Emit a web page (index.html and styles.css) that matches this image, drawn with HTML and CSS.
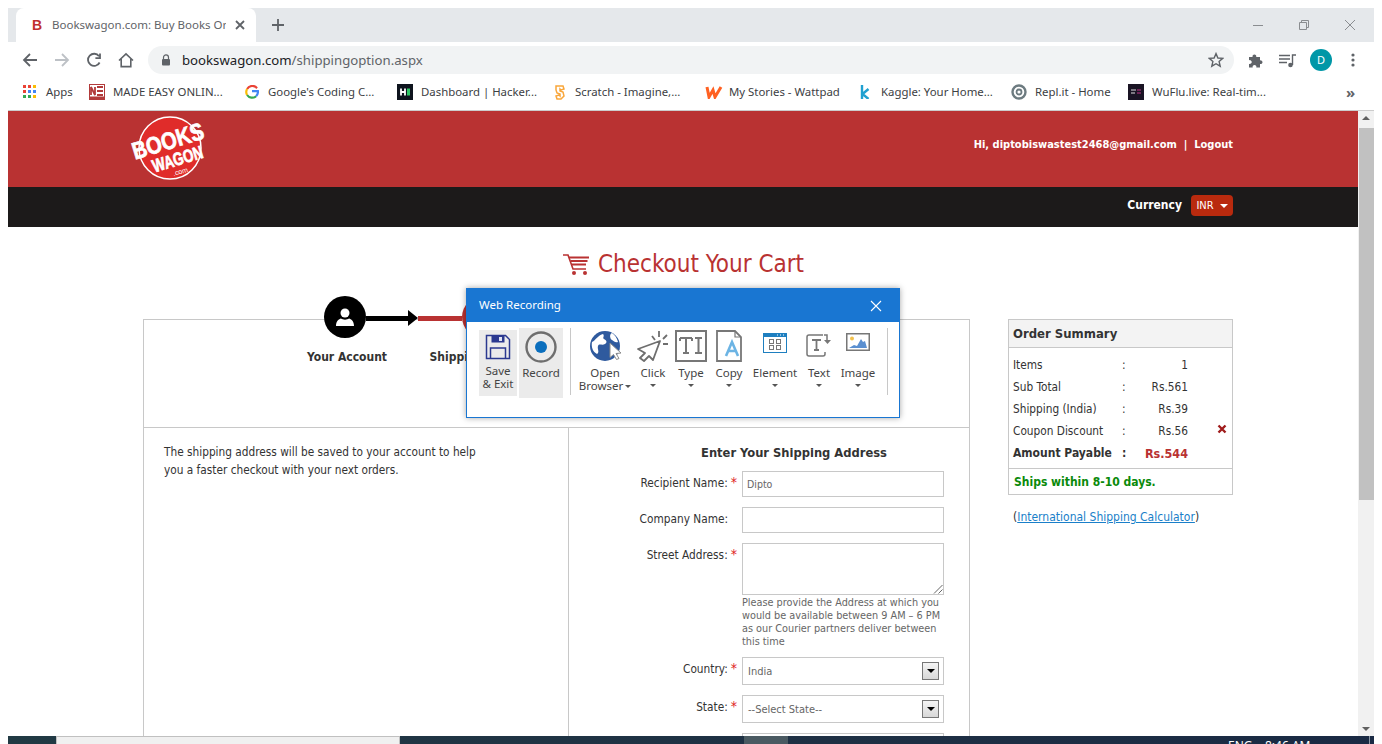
FILE: index.html
```html
<!doctype html>
<html>

<head>
    <meta charset="utf-8">
    <meta name="viewport" content="width=device-width, initial-scale=1">
    <title>Bookswagon.com: Buy Books Online</title>
    <link rel="stylesheet" href="styles.css">
</head>

<body>
    <div class="browser">
        <!-- tab strip -->
        <div class="tabstrip">
            <div class="tab">
                <span class="tab-fav">B</span>
                <span class="tab-title">Bookswagon.com: Buy Books Online</span>
                <svg class="tab-x" width="12" height="12" viewBox="0 0 12 12"><path d="M2 2l8 8M10 2l-8 8" stroke="#5f6368" stroke-width="1.8"/></svg>
            </div>
            <svg class="tab-new" width="14" height="14" viewBox="0 0 14 14"><path d="M7 1v12M1 7h12" stroke="#5f6368" stroke-width="1.8"/></svg>
            <div class="win-btns">
                <svg width="12" height="12" viewBox="0 0 12 12"><path d="M1 6.5h10" stroke="#8a8d90"/></svg>
                <svg width="12" height="12" viewBox="0 0 12 12" fill="none"><path d="M1.5 3.5h7v7h-7zM3.5 3.5v-2h7v7h-2" stroke="#8a8d90"/></svg>
                <svg width="12" height="12" viewBox="0 0 12 12"><path d="M1 1l10 10M11 1L1 11" stroke="#8a8d90"/></svg>
            </div>
        </div>

        <!-- toolbar -->
        <div class="toolbar">
            <svg class="nav" width="16" height="16" viewBox="0 0 16 16" fill="none"><path d="M15 8H2M8 2L2 8l6 6" stroke="#5f6368" stroke-width="1.8"/></svg>
            <svg class="nav" width="16" height="16" viewBox="0 0 16 16" fill="none"><path d="M1 8h13M8 2l6 6-6 6" stroke="#bdc1c6" stroke-width="1.8"/></svg>
            <svg class="nav" width="16" height="16" viewBox="0 0 16 16" fill="none"><path d="M13.6 10.5A6.1 6.1 0 1 1 13 4.2M14 1.5v4.6H9.4" stroke="#5f6368" stroke-width="1.8"/></svg>
            <svg class="nav" width="16" height="16" viewBox="0 0 16 16" fill="none"><path d="M1 8.5L8 1.8l7 6.7M3.2 7v7.6h9.6V7" stroke="#5f6368" stroke-width="1.6"/></svg>
            <div class="omnibox">
                <svg width="10" height="12" viewBox="0 0 10 12"><path d="M2.5 5V3.4a2.5 2.5 0 0 1 5 0V5" fill="none" stroke="#5f6368" stroke-width="1.2"/><rect x="1" y="5" width="8" height="6.5" rx="1" fill="#5f6368"/></svg>
                <span class="url"><b>bookswagon.com</b>/shippingoption.aspx</span>
                <svg class="star" width="16" height="16" viewBox="0 0 16 16"><path d="M8 1.6l1.9 4.4 4.8.4-3.6 3.1 1.1 4.7L8 11.7l-4.2 2.5 1.1-4.7-3.6-3.1 4.8-.4z" fill="none" stroke="#5f6368" stroke-width="1.4"/></svg>
            </div>
            <svg class="puzzle" width="16" height="16" viewBox="0 0 16 16"><path d="M1 5h3.6a1.9 1.9 0 1 1 3.6 0H12v3.4a1.9 1.9 0 1 1 0 3.6V15.500H8.300a1.900 1.900 0 1 0-3.600 0H1v-3.800a1.900 1.900 0 1 0 0-3.400z" fill="#5f6368"/></svg>
            <svg class="media" width="18" height="14" viewBox="0 0 18 14" fill="none"><path d="M0 1.500h11M0 5h11M0 8.500h8" stroke="#5f6368" stroke-width="1.300"/><path d="M13.500 11V1h3.500" stroke="#5f6368" stroke-width="1.400"/><circle cx="11.500" cy="11" r="2.300" fill="#5f6368"/></svg>
            <span class="avatar">D</span>
            <svg class="dots" width="4" height="14" viewBox="0 0 4 14"><circle cx="2" cy="2" r="1.600" fill="#5f6368"/><circle cx="2" cy="7" r="1.600" fill="#5f6368"/><circle cx="2" cy="12" r="1.600" fill="#5f6368"/></svg>
        </div>

        <!-- bookmarks -->
        <div class="bookmarks">
            <a class="bm bm-apps">
                <svg width="14" height="14" viewBox="0 0 14 14">
                    <rect width="3" height="3" fill="#ea4335"/><rect x="5" width="3" height="3" fill="#ea4335"/><rect x="10" width="3" height="3" fill="#fbbc04"/>
                    <rect y="5" width="3" height="3" fill="#ea4335"/><rect x="5" y="5" width="3" height="3" fill="#4285f4"/><rect x="10" y="5" width="3" height="3" fill="#4285f4"/>
                    <rect y="10" width="3" height="3" fill="#34a853"/><rect x="5" y="10" width="3" height="3" fill="#34a853"/><rect x="10" y="10" width="3" height="3" fill="#fbbc04"/>
                </svg>
                Apps
            </a>
            <a class="bm bm-made">
                <svg width="16" height="16" viewBox="0 0 16 16"><rect x=".5" y=".5" width="15" height="15" fill="#fff" stroke="#b23a3a"/><path d="M2 11V3l4 8V3M8 3h6M8 7h6M8 11h6" fill="none" stroke="#b23a3a" stroke-width="1.800"/><rect x="1" y="12.500" width="14" height="2.500" fill="#b23a3a"/></svg>
                MADE EASY ONLIN...
            </a>
            <a class="bm bm-google">
                <svg width="14" height="14" viewBox="0 0 14 14" fill="none" stroke-width="2.200"><path d="M12 3.200A6 6 0 0 0 2.100 4" stroke="#ea4335"/><path d="M2.100 4a6 6 0 0 0 0 6" stroke="#fbbc04"/><path d="M2.100 10a6 6 0 0 0 9 1.200" stroke="#34a853"/><path d="M11.100 11.200A6 6 0 0 0 12.900 6.200H7" stroke="#4285f4"/></svg>
                Google's Coding C...
            </a>
            <a class="bm bm-hacker">
                <svg width="16" height="16" viewBox="0 0 16 16"><rect width="16" height="16" fill="#0e141e"/><path d="M4 4.500v7M8 4.500v7M4 8h4" stroke="#fff" stroke-width="1.800"/><rect x="10" y="4.500" width="3" height="7" fill="#2ec866"/></svg>
                Dashboard | Hacker...
            </a>
            <a class="bm bm-scratch">
                <svg width="14" height="16" viewBox="0 0 14 16"><path d="M3 2h7l1 3-3 1-1-1 0 2 3 1 1 4-3 3H4l-1-3 3-1 1 1v-2L4 9 3 6z" fill="#fff" stroke="#f9a63a" stroke-width="1.500"/></svg>
                Scratch - Imagine,...
            </a>
            <a class="bm bm-wattpad">
                <svg width="18" height="14" viewBox="0 0 18 14"><path d="M2 2l2 10 4-7 2 7 6-10" fill="none" stroke="#ff6122" stroke-width="3"/></svg>
                My Stories - Wattpad
            </a>
            <a class="bm bm-kaggle">
                <svg width="10" height="14" viewBox="0 0 10 14"><path d="M2 0v14M8.500 4L2.500 9l6 5" fill="none" stroke="#20a0d0" stroke-width="2.400"/></svg>
                Kaggle: Your Home...
            </a>
            <a class="bm bm-repl">
                <svg width="16" height="16" viewBox="0 0 16 16" fill="none"><circle cx="8" cy="8" r="6.500" stroke="#6d7b80" stroke-width="2.400"/><circle cx="8" cy="8" r="2.500" stroke="#6d7b80" stroke-width="1.800"/></svg>
                Repl.it - Home
            </a>
            <a class="bm bm-wuflu">
                <svg width="16" height="16" viewBox="0 0 16 16"><rect width="16" height="16" fill="#1a1424"/><path d="M3 6h5M3 9h4" stroke="#ddd" stroke-width="1.200"/><path d="M9 6h4M9 9h4" stroke="#c2338a" stroke-width="1.200"/></svg>
                WuFlu.live: Real-tim...
            </a>
            <span class="bm-more">»</span>
        </div>

        <!-- page -->
        <div class="viewport">
            <div class="page">
                <div class="site-head">
                    <svg class="logo" width="80" height="70" viewBox="0 0 80 70">
                        <circle cx="44" cy="32" r="31" fill="#e02c2a" stroke="#fff" stroke-width="1.500"/>
                        <g transform="rotate(-17 44 32)" text-anchor="middle" font-family="'Liberation Sans', sans-serif" font-weight="700" fill="#fff">
                            <text class="logo-big" x="44" y="33" font-size="24" textLength="74" lengthAdjust="spacingAndGlyphs">BOOKS</text>
                            <text class="logo-big" x="48" y="51" font-size="18" textLength="52" lengthAdjust="spacingAndGlyphs">WAGON</text>
                            <text x="47" y="60" font-size="7" font-weight="400">.com</text>
                        </g>
                    </svg>
                    <div class="hi">Hi, diptobiswastest2468@gmail.com &nbsp;|&nbsp; Logout</div>
                </div>
                <div class="currency-bar">
                    <span class="cur-label">Currency</span>
                    <span class="cur-btn">INR <i class="caret-w"></i></span>
                </div>

                <h1 class="checkout">
                    <svg width="28" height="22" viewBox="0 0 28 22" fill="none"><path d="M0 1h5l5 14h13" stroke="#b93232" stroke-width="1.600"/><path d="M6 3.500h20M7.500 7h17M8.500 10.500h14.500" stroke="#b93232" stroke-width="2"/><circle cx="11" cy="19" r="2" fill="#b93232"/><circle cx="22" cy="19" r="2" fill="#b93232"/></svg>
                    Checkout Your Cart
                </h1>

                <div class="columns">
                    <div class="panel">
                        <div class="steps">
                            <div class="step step-one">
                                <span class="dot dot-black">
                                    <svg width="20" height="20" viewBox="0 0 20 20"><circle cx="10" cy="6" r="4.500" fill="#fff"/><path d="M1 19c0-5 3-7 5-7.500 2 1.500 6 1.500 8 0 2 .5 5 2.500 5 7.500z" fill="#fff"/></svg>
                                </span>
                                <span class="step-name">Your Account</span>
                            </div>
                            <div class="arrow"></div>
                            <div class="redline"></div>
                            <div class="step step-two">
                                <span class="dot dot-red"></span>
                                <span class="step-name">Shipping Address</span>
                            </div>
                        </div>
                        <div class="panel-body">
                            <div class="note">The shipping address will be saved to your account to help you a faster checkout with your next orders.</div>
                            <div class="form">
                                <h3 class="form-title">Enter Your Shipping Address</h3>
                                <div class="row"><label>Recipient Name:<em>*</em></label><div class="field">Dipto</div></div>
                                <div class="row"><label class="plain">Company Name:</label><div class="field"></div></div>
                                <div class="row row-tight">
                                    <label>Street Address:<em>*</em></label>
                                    <div class="field-wrap">
                                        <div class="field field-area">
                                            <svg width="10" height="10" viewBox="0 0 10 10"><path d="M9.500 1L1 9.500M9.500 5.500l-4 4" stroke="#666"/></svg>
                                        </div>
                                        <p class="help">Please provide the Address at which you would be available between 9 AM – 6 PM as our Courier partners deliver between this time</p>
                                    </div>
                                </div>
                                <div class="row row-sel"><label>Country:<em>*</em></label><div class="field field-sel">India<span class="sel-btn"><i class="caret-k"></i></span></div></div>
                                <div class="row row-sel"><label>State:<em>*</em></label><div class="field field-sel">--Select State--<span class="sel-btn"><i class="caret-k"></i></span></div></div>
                                <div class="row"><label></label><div class="field"></div></div>
                            </div>
                        </div>
                    </div>

                    <div class="side">
                        <div class="summary">
                            <div class="sum-title">Order Summary</div>
                            <div class="sum-rows">
                                <div class="sum-row"><span>Items</span><span>:</span><span class="amt">1</span></div>
                                <div class="sum-row"><span>Sub Total</span><span>:</span><span class="amt">Rs.561</span></div>
                                <div class="sum-row"><span>Shipping (India)</span><span>:</span><span class="amt">Rs.39</span></div>
                                <div class="sum-row"><span>Coupon Discount</span><span>:</span><span class="amt">Rs.56</span>
                                    <svg width="10" height="10" viewBox="0 0 10 10"><path d="M1.500 1.500l7 7M8.500 1.500l-7 7" stroke="#a01c1c" stroke-width="2.400"/></svg>
                                </div>
                                <div class="sum-row sum-total"><span>Amount Payable</span><span>:</span><span class="amt">Rs.544</span></div>
                            </div>
                            <div class="ships">Ships within 8-10 days.</div>
                        </div>
                        <div class="calc">(<a>International Shipping Calculator</a>)</div>
                    </div>
                </div>
            </div>
            <div class="scrollbar">
                <i class="sb-up"></i>
                <div class="sb-thumb"></div>
                <i class="sb-down"></i>
            </div>
        </div>

        <!-- taskbar peeking in at the bottom -->
        <div class="taskbar">
            <div class="tb-window"></div>
            <div class="tb-active"></div>
            <div class="tb-clock">ENG &nbsp;&nbsp; 8:46 AM</div>
            <div class="tb-edge"></div>
        </div>

        <!-- recorder dialog -->
        <div class="recorder">
            <div class="rec-head">
                <span>Web Recording</span>
                <svg width="12" height="12" viewBox="0 0 12 12"><path d="M1 1l10 10M11 1L1 11" stroke="#fff" stroke-width="1.100"/></svg>
            </div>
            <div class="rec-body">
                <div class="rec-btn rec-save">
                    <svg width="26" height="26" viewBox="0 0 26 26" fill="none"><path d="M1.500 1.500h19l4 4v19h-23z" stroke="#2b3990" stroke-width="1.500"/><rect x="6.500" y="1.500" width="13" height="7" fill="#2b3990"/><rect x="14" y="3" width="3" height="4" fill="#dfe3f3"/><path d="M5.500 24v-10h15v10" stroke="#2b3990" stroke-width="1.500"/></svg>
                    <span>Save<br>&amp; Exit</span>
                </div>
                <div class="rec-btn rec-record">
                    <svg width="32" height="32" viewBox="0 0 32 32"><circle cx="16" cy="16" r="14.500" fill="none" stroke="#6e6e6e" stroke-width="2.400"/><circle cx="16" cy="16" r="6" fill="#0a6ebd"/></svg>
                    <span>Record</span>
                </div>
                <div class="rec-sep"></div>
                <div class="rec-tools">
                    <div class="tool">
                        <div class="tool-ico">
                            <svg width="36" height="32" viewBox="0 0 36 32">
                                <circle cx="18" cy="16" r="15" fill="#2f5a9e"/>
                                <path d="M5 12c4-2 5-6 11-8 2 2-1 4 1 5s4 3 1 5-6-1-7 2 2 6-1 8c-4-2-6-7-5-12zM25 3c3 2 5 5 6 9-3 1-4-1-6-2s-3-6 0-7z" fill="#fff"/>
                                <path d="M23 13l11 10-5 .5 3 5-2.500 1-3-5-3.500 3z" fill="#fff" stroke="#8a8a8a"/>
                            </svg>
                        </div>
                        <span>Open<br>Browser<i class="caret-g caret-inline"></i></span>
                    </div>
                    <div class="tool">
                        <div class="tool-ico">
                            <svg width="32" height="32" viewBox="0 0 32 32" fill="none">
                                <path d="M23 11L1 19l7 4-5 5 4 3 5-5 4 4z" stroke="#6e6e6e" stroke-width="1.800" stroke-linejoin="round"/>
                                <path d="M15 6l3 4M22 1v6M30 5l-4 4M31 14h-5" stroke="#6e6e6e" stroke-width="1.800"/>
                            </svg>
                        </div>
                        <span>Click</span>
                        <i class="caret-g"></i>
                    </div>
                    <div class="tool">
                        <div class="tool-ico">
                            <svg width="32" height="32" viewBox="0 0 32 32" fill="none">
                                <rect x="1" y="1" width="30" height="30" stroke="#777" stroke-width="2"/>
                                <path d="M5 8h12M11 8v15M8 23h6M20 8h7M23.500 8v15M20 23h7M5 8v3M17 8v3" stroke="#777" stroke-width="2"/>
                            </svg>
                        </div>
                        <span>Type</span>
                        <i class="caret-g"></i>
                    </div>
                    <div class="tool">
                        <div class="tool-ico">
                            <svg width="26" height="32" viewBox="0 0 26 32" fill="none">
                                <path d="M1 1h18l6 6v24H1z" stroke="#777" stroke-width="1.800"/>
                                <path d="M19 1v6h6" stroke="#777" stroke-width="1.200"/>
                                <path d="M10 26l6-14 6 14M12 21h8" stroke="#6cb4e4" stroke-width="2.600"/>
                            </svg>
                        </div>
                        <span>Copy</span>
                        <i class="caret-g"></i>
                    </div>
                    <div class="tool">
                        <div class="tool-ico tool-mid">
                            <svg width="24" height="20" viewBox="0 0 24 20">
                                <rect width="24" height="20" fill="#1e7fc0"/>
                                <rect x="1" y="4" width="22" height="15" fill="#fff"/>
                                <path d="M14 2h1M17 2h1M20 2h1" stroke="#fff"/>
                                <g fill="none" stroke="#777"><rect x="6.500" y="6.500" width="4" height="4"/><rect x="13.500" y="6.500" width="4" height="4"/><rect x="6.500" y="12.500" width="4" height="4"/><rect x="13.500" y="12.500" width="4" height="4"/></g>
                            </svg>
                        </div>
                        <span>Element</span>
                        <i class="caret-g"></i>
                    </div>
                    <div class="tool">
                        <div class="tool-ico tool-mid">
                            <svg width="26" height="24" viewBox="0 0 26 24" fill="none">
                                <path d="M17 2H3a2 2 0 0 0-2 2v17a2 2 0 0 0 2 2h14a2 2 0 0 0 2-2v-2" stroke="#777" stroke-width="1.500"/>
                                <path d="M6 7h9M10.500 7v10M8 17h5" stroke="#777" stroke-width="1.800"/>
                                <path d="M18 2h3v6" stroke="#777" stroke-width="1.500"/><path d="M18 7h7l-3.500 4z" fill="#777"/>
                            </svg>
                        </div>
                        <span>Text</span>
                        <i class="caret-g"></i>
                    </div>
                    <div class="tool">
                        <div class="tool-ico tool-mid">
                            <svg width="24" height="18" viewBox="0 0 24 18">
                                <rect x=".750" y=".750" width="22.500" height="16.500" fill="#fff" stroke="#777" stroke-width="1.500"/>
                                <circle cx="6" cy="5.500" r="2" fill="#f2c14e"/>
                                <path d="M3 15l5-3 3 1 4-7 2 3 2-1 2 7z" fill="#5a8fd0"/>
                            </svg>
                        </div>
                        <span>Image</span>
                        <i class="caret-g"></i>
                    </div>
                </div>
                <div class="rec-sep rec-sep-end"></div>
            </div>
        </div>
    </div>
</body>

</html>
```

FILE: styles.css
```css
html, body {
    margin: 0;
    height: 744px;
    overflow: hidden;
    background: #fff;
}
body {
    font-family: 'DejaVu Sans Condensed', 'DejaVu Sans', sans-serif;
    font-size: 12px;
    color: #333;
}
.browser {
    position: relative;
    margin: 0 8px;
    padding-top: 8px;
    height: 736px;
    display: flex;
    flex-direction: column;
    font-family: 'Noto Sans', sans-serif;
}

/* tab strip */
.tabstrip {
    height: 34px;
    background: #e5e8eb;
    display: flex;
    align-items: flex-end;
    padding-left: 8px;
    flex: none;
}
.tab {
    width: 240px;
    height: 34px;
    background: #fff;
    border-radius: 8px 8px 0 0;
    display: flex;
    align-items: center;
    box-sizing: border-box;
    padding: 0 10px 0 16px;
    color: #5f6368;
    font-size: 11.500px;
}
.tab-fav {
    font: 700 14px 'Liberation Sans', sans-serif;
    color: #c0302f;
    width: 12px;
    margin-right: 8px;
}
.tab-title {
    flex: 1;
    overflow: hidden;
    white-space: nowrap;
    margin: 0 8px 2px 0;
}
.tab-new {
    margin: 0 0 10px 15px;
}
.win-btns {
    margin-left: auto;
    margin-bottom: 11px;
    display: flex;
    gap: 34px;
    padding-right: 18px;
}

/* toolbar */
.toolbar {
    height: 32px;
    display: flex;
    align-items: flex-end;
    flex: none;
}
.toolbar svg {
    margin-bottom: 6px;
}
.nav {
    margin-left: 16px;
    width: 16px;
}
.toolbar .nav:first-child {
    margin-left: 14px;
}
.omnibox {
    width: 1086px;
    height: 28px;
    margin-left: 14px;
    background: #f1f3f4;
    border-radius: 14px;
    display: flex;
    align-items: center;
    padding-left: 13px;
    box-sizing: border-box;
}
.toolbar .omnibox svg {
    margin-bottom: 0;
}
.url {
    margin-left: 11px;
    font-size: 13.200px;
    color: #5f6368;
}
.url b {
    font-weight: 400;
    color: #202124;
}
.star {
    margin-left: auto;
    margin-right: 10px;
}
.puzzle {
    margin-left: 14px;
}
.media {
    margin-left: 15px;
}
.avatar {
    width: 22px;
    height: 22px;
    border-radius: 50%;
    background: #0097a7;
    color: #fff;
    font-size: 11px;
    line-height: 22px;
    text-align: center;
    margin-left: 13px;
    margin-bottom: 3px;
}
.toolbar .dots {
    margin-left: 19px;
    margin-bottom: 7px;
}

/* bookmarks */
.bookmarks {
    height: 35px;
    padding-bottom: 1px;
    border-bottom: 1px solid #ccc;
    display: flex;
    align-items: center;
    padding-left: 15px;
    flex: none;
    color: #3c4043;
    font-size: 11.400px;
}
.bm {
    display: flex;
    align-items: center;
    gap: 8px;
    white-space: nowrap;
    flex: none;
}
.bm-apps { width: 66px; gap: 9px; }
.bm-made { width: 156px; }
.bm-google { width: 152px; gap: 9px; }
.bm-hacker { width: 156px; }
.bm-scratch { width: 152px; gap: 8px; }
.bm-wattpad { width: 155px; gap: 6px; }
.bm-kaggle { width: 151px; gap: 11px; }
.bm-repl { width: 117px; }
.bm-wuflu { width: 218px; }
.bm-more {
    font-size: 15px;
    font-weight: 700;
    color: #5f6368;
}

/* page area */
.viewport {
    display: flex;
    height: 625px;
    flex: none;
}
.page {
    flex: 1;
    min-width: 0;
    overflow: hidden;
    font-family: 'DejaVu Sans Condensed', 'DejaVu Sans', sans-serif;
    font-size: 11.750px;
}
.site-head {
    height: 76px;
    background: #b93232;
    display: flex;
    align-items: flex-start;
    color: #fff;
    box-sizing: border-box;
    padding: 5px 125px 0 118px;
}
.logo {
    flex: none;
    overflow: visible;
}
.logo-big {
    stroke: #fff;
    stroke-width: .7px;
}
.hi {
    margin-left: auto;
    margin-top: 22px;
    font-weight: 700;
    font-size: 11px;
}
.currency-bar {
    height: 40px;
    background: #1c1a1a;
    color: #fff;
    display: flex;
    align-items: center;
    justify-content: flex-end;
    padding-right: 125px;
    font-weight: 700;
    font-size: 12px;
}
.cur-label {
    margin-bottom: 4px;
}
.cur-btn {
    margin-left: 9px;
    width: 42px;
    height: 21px;
    margin-bottom: 3px;
    background: #b92a0e;
    border-radius: 4px;
    font-weight: 400;
    font-size: 11px;
    display: flex;
    align-items: center;
    justify-content: center;
    gap: 6px;
}
.caret-w {
    border: 4px solid transparent;
    border-top-color: #fff;
    border-bottom: 0;
}
.checkout {
    margin: 23px 0 0;
    height: 69px;
    font-size: 24px;
    font-weight: 400;
    color: #b93232;
    display: flex;
    align-items: flex-start;
    justify-content: center;
    gap: 7px;
    line-height: 28px;
    padding-left: 1px;
}
.checkout svg {
    margin-top: 4px;
}
.columns {
    display: flex;
    padding-left: 135px;
    align-items: flex-start;
}

/* left panel */
.panel {
    width: 827px;
    box-sizing: border-box;
    border: 1px solid #c8c8c8;
    flex: none;
}
.steps {
    height: 108px;
    border-bottom: 1px solid #c8c8c8;
    display: flex;
    align-items: flex-start;
    margin-top: -1px;
    padding-left: 180px;
}
.step {
    display: flex;
    flex-direction: column;
    align-items: center;
    margin-top: -23px;
    flex: none;
}
.step-one,
.step-two {
    width: 42px;
}
.step-name {
    margin-top: 12px;
    font-weight: 700;
    white-space: nowrap;
    font-size: 12px;
}
.step-one .step-name {
    margin-left: 4px;
}
.dot {
    width: 42px;
    height: 42px;
    border-radius: 50%;
    display: flex;
    align-items: center;
    justify-content: center;
    background: #000;
}
.dot-red {
    background: #b93232;
}
.arrow {
    width: 44px;
    height: 5px;
    background: #000;
    margin-top: -3px;
    position: relative;
    flex: none;
}
.arrow::after {
    content: "";
    position: absolute;
    left: 42px;
    top: -6px;
    border-left: 10px solid #000;
    border-top: 8.500px solid transparent;
    border-bottom: 8.500px solid transparent;
}
.redline {
    width: 44px;
    height: 5px;
    background: #b93232;
    margin: -3px 0 0 8px;
    flex: none;
}
.panel-body {
    display: flex;
    height: 400px;
}
.note {
    width: 425px;
    box-sizing: border-box;
    border-right: 1px solid #c8c8c8;
    padding: 15px 70px 0 20px;
    line-height: 18px;
}
.form {
    flex: 1;
    padding-top: 16px;
}
.form-title {
    margin: 0 0 10px;
    font-size: 12.800px;
    text-align: center;
    line-height: 17px;
    padding-left: 50px;
}
.row {
    display: flex;
    margin-bottom: 10px;
}
.row label {
    width: 173px;
    flex: none;
    text-align: right;
    padding: 5px 5px 0 0;
    box-sizing: border-box;
}
.row label.plain {
    padding-right: 14px;
}
.row label em {
    color: #e02020;
    font-style: normal;
    font-size: 14px;
    line-height: 10px;
    margin-left: 3px;
}
.field {
    width: 202px;
    height: 26px;
    border: 1px solid #c8c8c8;
    box-sizing: border-box;
    font-size: 10.500px;
    color: #666;
    padding: 6px 4px 0;
    position: relative;
}
.field-area {
    height: 52px;
    display: flex;
    align-items: flex-end;
    justify-content: flex-end;
    padding: 0;
}
.help {
    margin: 1px 0 0;
    width: 204px;
    font-size: 10.800px;
    line-height: 13px;
    color: #666;
}
.row-tight {
    margin-bottom: 9px;
}
.field-sel {
    height: 28px;
    padding: 7px 5px 0;
    font-size: 11px;
}
.sel-btn {
    position: absolute;
    right: 4px;
    top: 4px;
    width: 17px;
    height: 18px;
    border: 1px solid #777;
    box-sizing: border-box;
    background: linear-gradient(#f4f4f4, #d8d8d8);
    display: flex;
    align-items: center;
    justify-content: center;
}
.caret-k {
    border: 4px solid transparent;
    border-top-color: #000;
    border-bottom: 0;
}

/* right column */
.side {
    width: 225px;
    margin-left: 38px;
    flex: none;
}
.summary {
    border: 1px solid #c8c8c8;
}
.sum-title {
    height: 27px;
    line-height: 27px;
    background: #f3f3f3;
    border-bottom: 1px solid #c8c8c8;
    font-weight: 700;
    font-size: 13px;
    padding-left: 4px;
}
.sum-rows {
    padding: 6px 0 4px 4px;
}
.sum-row {
    display: flex;
    align-items: center;
    height: 22px;
}
.sum-row span:first-child {
    width: 109px;
    flex: none;
    white-space: nowrap;
}
.sum-row span:nth-child(2) {
    width: 3px;
}
.amt {
    width: 63px;
    text-align: right;
}
.sum-row svg {
    margin-left: 29px;
    margin-bottom: 4px;
}
.sum-total {
    font-weight: 700;
    font-size: 12px;
}
.sum-total .amt {
    color: #b93232;
    font-size: 12.500px;
}
.ships {
    border-top: 1px solid #c8c8c8;
    height: 25px;
    line-height: 26px;
    padding-left: 5px;
    font-weight: 700;
    font-size: 12px;
    color: #0a8a0a;
}
.calc {
    margin-top: 15px;
    padding-left: 5px;
    font-size: 12px;
}
.calc a {
    color: #1a7fc9;
    text-decoration: underline;
}

/* scrollbar */
.scrollbar {
    width: 16px;
    flex: none;
    background: #f1f1f1;
    display: flex;
    flex-direction: column;
    align-items: center;
}
.sb-up {
    margin-top: 5px;
    border: 4px solid transparent;
    border-bottom-color: #606060;
    border-top: 0;
}
.sb-thumb {
    width: 15px;
    height: 372px;
    margin-top: 8px;
    background: #c1c1c1;
}
.sb-down {
    margin-top: auto;
    margin-bottom: 5px;
    border: 4px solid transparent;
    border-top-color: #606060;
    border-bottom: 0;
}

/* taskbar */
.taskbar {
    height: 8px;
    flex: none;
    display: flex;
    overflow: hidden;
    background: linear-gradient(90deg, #213a44, #1e3044 60%, #1a2a44);
}
.tb-window {
    width: 344px;
    margin-left: 48px;
    background: #f0f0f0;
    border: 1px solid #c0c0c0;
    border-bottom: 0;
    box-sizing: border-box;
    flex: none;
}
.tb-active {
    width: 44px;
    margin-left: 344px;
    background: #4a5a62;
    flex: none;
}
.tb-clock {
    margin-left: 440px;
    color: #fff;
    font-size: 12px;
    line-height: 20px;
    white-space: nowrap;
}
.tb-edge {
    margin-left: auto;
    width: 4px;
    border-left: 1px solid #8a97a5;
}

/* recorder dialog, floats over the page */
.recorder {
    position: absolute;
    left: 458px;
    top: 288px;
    width: 434px;
    height: 130px;
    background: #fff;
    border: 1px solid #1976d2;
    box-sizing: border-box;
    box-shadow: 0 0 6px rgba(0, 0, 0, .35);
    color: #444;
}
.rec-head {
    height: 33px;
    background: #1976d2;
    color: #fff;
    display: flex;
    align-items: center;
    justify-content: space-between;
    padding: 0 17px 2px 12px;
    box-sizing: border-box;
    font-size: 11.500px;
}
.rec-head svg {
    margin-top: 2px;
}
.rec-body {
    display: flex;
    align-items: flex-start;
    padding: 6px 0 0 12px;
    font-size: 11.500px;
    line-height: 13px;
    text-align: center;
}
.rec-btn {
    display: flex;
    flex-direction: column;
    align-items: center;
    background: #ebebeb;
    flex: none;
}
.rec-save {
    width: 38px;
    height: 66px;
    margin-top: 2px;
    padding-top: 4px;
    box-sizing: border-box;
    gap: 4px;
}
.rec-record {
    width: 44px;
    height: 70px;
    margin-left: 2px;
    padding-top: 3px;
    box-sizing: border-box;
    gap: 3px;
}
.rec-sep {
    width: 1px;
    height: 67px;
    background: #c8c8c8;
    margin-left: 7px;
    flex: none;
}
.rec-sep-end {
    margin-left: 12px;
}
.rec-tools {
    display: grid;
    grid-template-columns: 48px 48px 28px 48px 44px 44px 34px;
    margin-left: 10px;
    margin-top: 2px;
}
.tool {
    display: flex;
    flex-direction: column;
    align-items: center;
    white-space: nowrap;
}
.tool-ico {
    height: 36px;
    flex: none;
}
.tool-mid {
    padding-top: 3px;
    height: 33px;
}
.tool span {
    display: block;
}
.caret-g {
    display: block;
    border: 3px solid transparent;
    border-top-color: #555;
    border-bottom: 0;
    margin-top: 5px;
}
.caret-inline {
    display: inline-block;
    margin: 0 0 2px 2px;
}
```
